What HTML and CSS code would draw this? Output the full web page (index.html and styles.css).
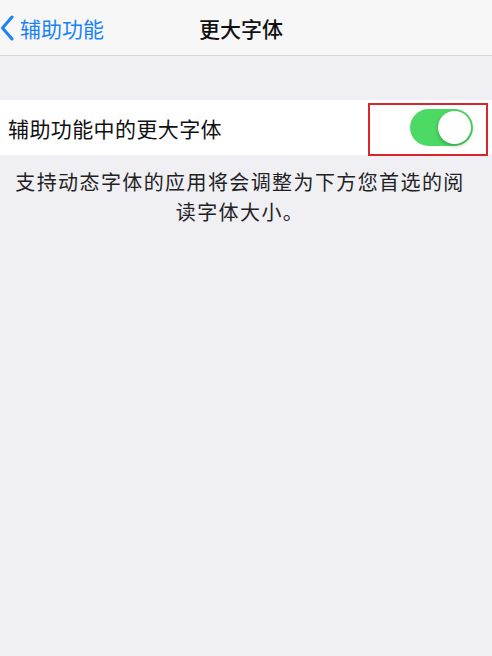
FILE: index.html
```html
<!DOCTYPE html>
<html lang="zh">
<head>
<meta charset="utf-8">
<link rel="stylesheet" href="styles.css">
</head>
<body>
<div class="page">
  <header class="nav">
    <div class="back">
      <svg class="chev" width="14" height="26" viewBox="0 0 14 26"><path d="M12 2 L2.5 13 L12 24" fill="none" stroke="#1a82f6" stroke-width="3" stroke-linecap="round" stroke-linejoin="round"/></svg>
      <span>辅助功能</span>
    </div>
    <div class="title">更大字体</div>
  </header>
  <section class="group">
    <div class="row">
      <span class="label">辅助功能中的更大字体</span>
      <div class="highlight">
        <div class="switch"><div class="knob"></div></div>
      </div>
    </div>
  </section>
  <p class="footer">支持动态字体的应用将会调整为下方您首选的阅读字体大小。</p>
</div>
</body>
</html>
```
FILE: styles.css
```css
html, body { margin: 0; padding: 0; }
body {
  background: #efeff4;
  font-family: "Noto Sans CJK SC", "Noto Sans", sans-serif;
  width: 492px;
  height: 656px;
  overflow: hidden;
}
.nav {
  position: relative;
  height: 56px;
  background: #f7f7f8;
  border-bottom: 1px solid #d6d6da;
  box-sizing: border-box;
  display: flex;
  align-items: center;
  justify-content: center;
}
.back {
  position: absolute;
  left: 0;
  top: 0;
  height: 56px;
  display: flex;
  align-items: center;
  gap: 6px;
  color: #1a82f6;
  font-size: 21px;
}
.chev { display: block; }
.title {
  font-size: 21px;
  color: #111;
  font-weight: 500;
  margin-left: -10px;
  padding-top: 1px;
}
.group {
  margin-top: 44px;
  background: #fff;
}
.row {
  height: 55px;
  display: flex;
  align-items: center;
  justify-content: space-between;
  padding-left: 8px;
}
.label {
  font-size: 21px;
  color: #111;
  letter-spacing: 0.4px;
}
.highlight {
  width: 120px;
  height: 53px;
  box-sizing: border-box;
  border: 2px solid #d9262c;
  margin-right: 4px;
  margin-top: 3px;
  display: flex;
  align-items: center;
  justify-content: flex-end;
  padding-right: 13px;
}
.switch {
  width: 63px;
  height: 37px;
  border-radius: 19px;
  background: #4cd964;
  position: relative;
  margin-top: -3px;
}
.knob {
  position: absolute;
  right: 2px;
  top: 2px;
  width: 33px;
  height: 33px;
  border-radius: 50%;
  background: #fff;
  box-shadow: 0 2px 4px rgba(0,0,0,0.25);
}
.footer {
  margin: 12px 0 0;
  padding: 0 20px 0 8px;
  font-size: 20px;
  line-height: 30px;
  color: #222;
  text-align: center;
  letter-spacing: 1.4px;
}
```
